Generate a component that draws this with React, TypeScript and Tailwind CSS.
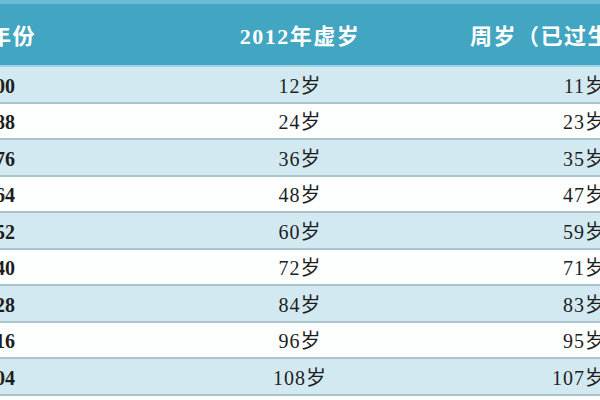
import React from "react";

const rows = [
  ["2000", "12岁", "11岁"],
  ["1988", "24岁", "23岁"],
  ["1976", "36岁", "35岁"],
  ["1964", "48岁", "47岁"],
  ["1952", "60岁", "59岁"],
  ["1940", "72岁", "71岁"],
  ["1928", "84岁", "83岁"],
  ["1916", "96岁", "95岁"],
  ["1904", "108岁", "107岁"],
];

const font = { fontFamily: '"Liberation Serif", "Noto Sans CJK SC", serif' };

export default function App() {
  return (
    <div className="w-[600px] h-[400px] overflow-hidden bg-[#fdfefe]" style={font}>
      <div className="h-[67px] bg-[#42a5c1] border-t-[4px] border-t-[#6cbcd3] border-b-2 border-b-[#9fd3e2] flex items-center pt-[4px] text-white font-bold text-[22px] tracking-[1.5px] whitespace-nowrap">
        <div className="w-[216px] ml-[-119px] mr-[5px] shrink-0 text-center">出生年份</div>
        <div className="w-[396px] shrink-0 text-center">2012年虚岁</div>
        <div className="shrink-0 ml-[-28px]">周岁（已过生日）</div>
      </div>
      {rows.map((r, i) => (
        <div
          key={i}
          className={
            "h-[36.5px] border-b-2 border-b-[#a9c4ca] flex items-center pt-[3px] text-[20px] text-[#1e1e1e] whitespace-nowrap " +
            (i % 2 === 0 ? "bg-[#d3e9f1]" : "bg-[#fdfefe]")
          }
        >
          <div className="w-[216px] ml-[-113px] mr-[-1px] shrink-0 text-center font-bold">{r[0]}</div>
          <div className="w-[396px] shrink-0 text-center tracking-[1px]">{r[1]}</div>
          <div className="w-[108px] shrink-0 text-right tracking-[1px]">{r[2]}</div>
        </div>
      ))}
    </div>
  );
}
